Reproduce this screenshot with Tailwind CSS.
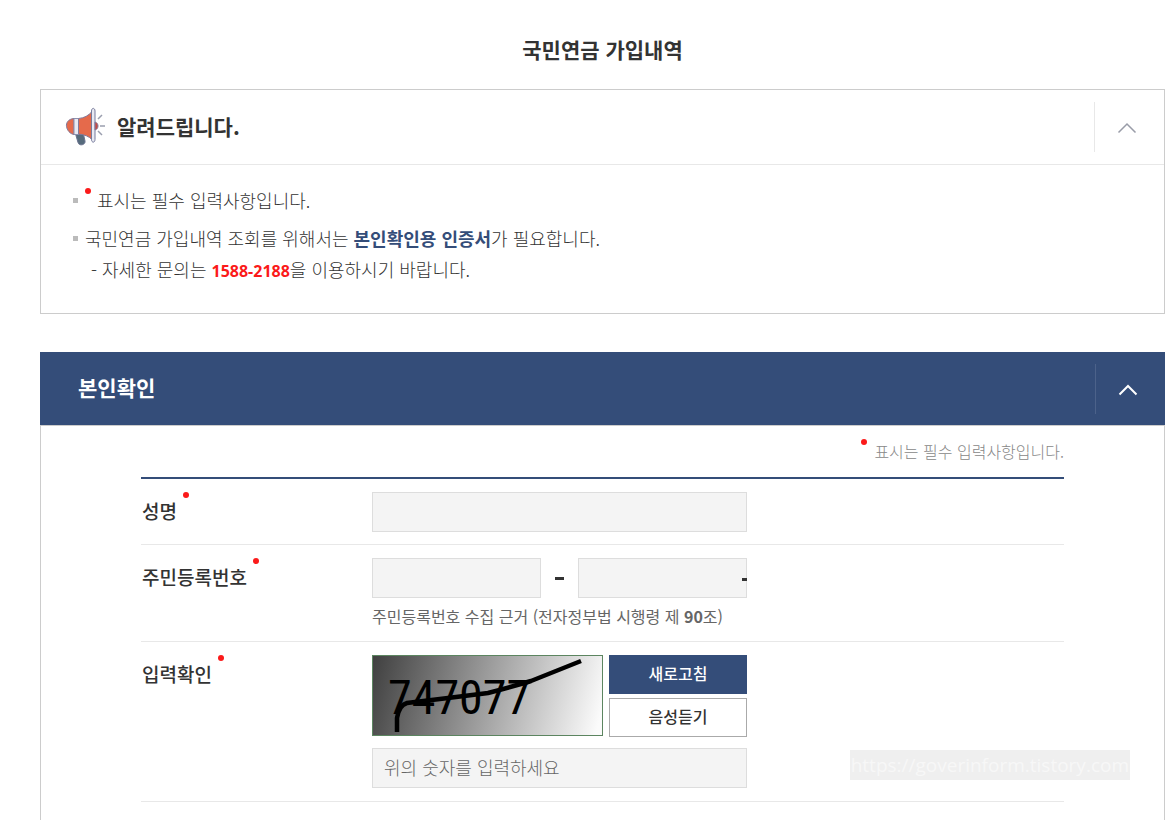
<!DOCTYPE html>
<html lang="ko">
<head>
<meta charset="utf-8">
<meta name="viewport" content="width=device-width, initial-scale=1">
<title>국민연금 가입내역</title>
<script src="https://cdn.jsdelivr.net/npm/@tailwindcss/browser@4"></script>
</head>
<body class="bg-white font-['Noto_Sans_CJK_KR',sans-serif] text-[#333]">
<main class="relative h-screen overflow-hidden pl-10 pr-[5px]">
  <h1 class="pt-[29px] pb-5 text-center text-[21px] leading-10 font-bold">국민연금 가입내역</h1>

  <section class="border border-[#ccc]">
    <header class="flex h-[75px] items-center border-b border-[#e8e8e8] pl-6">
      <svg class="h-10 w-11 shrink-0" viewBox="0 0 44 40" fill="none" aria-hidden="true">
        <path d="M10 25h8l2 9c.8 4-6 5.500-7 1.500z" fill="#566b7c" stroke="#6b7390"/>
        <path d="M9 11.500C3 12 1 16 1.500 19.500S5 27 9 27.500z" fill="#e56a4b" stroke="#80799b"/>
        <path d="M9 11.500h4.500v16H9z" fill="#e8e9f2" stroke="#8d90ae"/>
        <path d="M13.500 11.500c6-.5 10-3 13.500-7v28c-3-3-7.500-5-13.500-5.500z" fill="#e56a4b" stroke="#80799b"/>
        <path d="M26.500 4c0-3.500 3.500-3.500 3.500 0v28.500c0 3.500-3.500 3.500-3.500 0z" fill="#e8e9f2" stroke="#777b9c"/>
        <path d="M30 15c4 1 4 7 0 8z" fill="#c94b44" stroke="#80799b"/>
        <path d="M33 12l4-4m-2 11h5m-7 5l4 4" stroke="#9a9eae" stroke-width="1.500"/>
      </svg>
      <h2 class="ml-2 flex-1 pb-0.5 text-[21px] leading-8 font-bold">알려드립니다.</h2>
      <button type="button" aria-label="알림 접기" class="flex h-[50px] w-[70px] items-center justify-center border-l border-[#e8e8e8] pt-0.5 pr-1.5">
        <svg class="h-3 w-5" viewBox="0 0 20 12" fill="none" stroke="#999ca8" stroke-width="1.500" aria-hidden="true"><path d="M1.500 10.500L10 2l8.500 8.500"/></svg>
      </button>
    </header>
    <ul class="px-8 pt-5 pb-[29px] text-lg leading-[30px] font-light">
      <li class="flex items-center"><span class="mr-[7px] size-[5px] bg-[#bbb]"></span><span class="mr-1.5 mb-[19px] size-1.5 rounded-full bg-[#fb1a1a]"></span>표시는 필수 입력사항입니다.</li>
      <li class="mt-2 flex items-center"><span class="mr-[7px] size-[5px] bg-[#bbb]"></span><p>국민연금 가입내역 조회를 위해서는 <strong class="font-bold text-[#344d79]">본인확인용 인증서</strong>가 필요합니다.</p></li>
      <li class="pl-[18px] pt-px">- 자세한 문의는 <strong class="font-['Noto_Sans',sans-serif] text-base font-bold text-[#fb1a1a]">1588-2188</strong>을 이용하시기 바랍니다.</li>
    </ul>
  </section>

  <section class="mt-[38px]">
    <header class="flex h-[73px] items-center bg-[#344d79] pl-[38px] text-white">
      <h2 class="flex-1 pb-[3px] text-[21px] leading-8 font-bold">본인확인</h2>
      <button type="button" aria-label="본인확인 접기" class="flex h-[50px] w-[70px] items-center justify-center border-l border-[#4c628a] pt-0.5 pr-1.5">
        <svg class="h-3 w-5" viewBox="0 0 20 12" fill="none" stroke="#fff" stroke-width="2" aria-hidden="true"><path d="M1.500 10.500L10 2l8.500 8.500"/></svg>
      </button>
    </header>
    <form class="h-screen border border-[#ccc] px-[100px]">
      <p class="flex h-[51px] items-center justify-end text-base leading-6 font-light text-[#888]"><span class="mr-[7px] mb-[19px] size-1.5 rounded-full bg-[#fb1a1a]"></span><span class="pb-0.5">표시는 필수 입력사항입니다.</span></p>
      <div class="border-t-2 border-[#344d79]">
        <div class="flex border-b border-[#e8e8e8] pt-[13px] pb-3">
          <label for="name" class="flex w-[231px] items-start pl-px text-[19px] leading-[38px] font-medium">성명<span class="ml-1.5 size-1.5 rounded-full bg-[#fb1a1a]"></span></label>
          <input id="name" type="text" class="h-10 w-[375px] border border-[#ddd] bg-[#f4f4f4] px-3">
        </div>
        <div class="flex border-b border-[#e8e8e8] pt-[13px] pb-[9px]">
          <label for="rrn1" class="flex w-[231px] items-start pl-px text-[19px] leading-[38px] font-medium">주민등록번호<span class="ml-1.5 size-1.5 rounded-full bg-[#fb1a1a]"></span></label>
          <div>
            <div class="flex w-[375px] items-center">
              <input id="rrn1" type="text" class="h-10 w-[169px] border border-[#ddd] bg-[#f4f4f4] px-3">
              <span class="flex flex-1 justify-center"><span class="h-[3px] w-[9px] bg-[#333]"></span></span>
              <span class="relative"><input type="password" aria-label="주민등록번호 뒷자리" class="block h-10 w-[169px] border border-[#ddd] bg-[#f4f4f4] px-3"><span class="absolute top-5 right-0 h-[3px] w-[5px] bg-[#333]"></span></span>
            </div>
            <p class="pt-[3px] pb-px text-base leading-[30px] text-[#666]">주민등록번호 수집 근거 (전자정부법 시행령 제 <b class="font-bold">90</b>조)</p>
          </div>
        </div>
        <div class="flex border-b border-[#e8e8e8] py-[13px]">
          <label for="captcha" class="flex w-[231px] items-start pl-px text-[19px] leading-[38px] font-medium">입력확인<span class="ml-1.5 size-1.5 rounded-full bg-[#fb1a1a]"></span></label>
          <div class="w-[375px]">
            <div class="flex gap-1.5">
              <svg class="h-[81px] w-[231px] border border-[#5c8560]" viewBox="0 0 229 79" role="img" aria-label="자동입력 방지 숫자">
                <defs><linearGradient id="shade" gradientUnits="userSpaceOnUse" x1="0" y1="0" x2="228" y2="58"><stop stop-color="#404040"/><stop offset="1" stop-color="#fbfbfb"/></linearGradient></defs>
                <rect width="229" height="79" fill="url(#shade)"/>
                <text x="15" y="58" fill="#000" class="font-['Roboto_Condensed','Liberation_Sans_Narrow',sans-serif] text-[48px]">747077</text>
                <path d="M24 76V62Q26 49 34 47L75 42L115 37Q145 29 158 25L208 5" fill="none" stroke="#000" stroke-width="4.500"/>
              </svg>
              <div class="flex flex-1 flex-col gap-1">
                <button type="button" class="h-[39px] bg-[#344d79] pb-[3px] text-base font-medium text-white">새로고침</button>
                <button type="button" class="h-[39px] border border-[#aaa] bg-white pb-[3px] text-base font-medium">음성듣기</button>
              </div>
            </div>
            <input id="captcha" type="text" placeholder="위의 숫자를 입력하세요" class="mt-[11px] block h-10 w-full border border-[#ddd] bg-[#f4f4f4] px-[11px] pb-0.5 text-lg font-light placeholder:text-[#666]">
          </div>
        </div>
      </div>
    </form>
  </section>

  <div class="absolute right-10 bottom-10 flex h-[30px] items-center bg-[#efefef] px-px font-['Open_Sans',sans-serif] text-[19px] font-medium text-[#f7f7f7]">https://goverinform.tistory.com</div>
</main>
</body>
</html>
